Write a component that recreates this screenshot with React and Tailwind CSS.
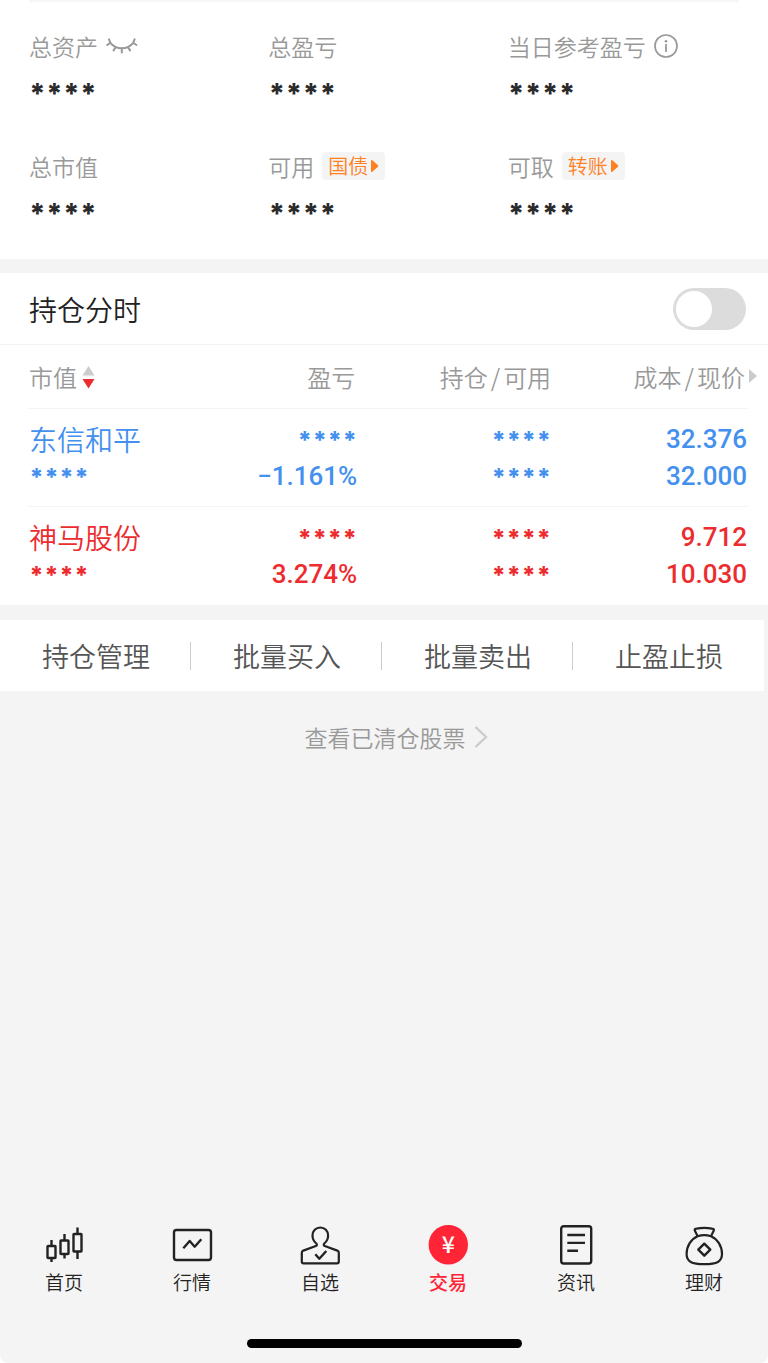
import { useState } from "react";

const summary = [
  { label: "总资产", icon: "eye" },
  { label: "总盈亏" },
  { label: "当日参考盈亏", icon: "info" },
  { label: "总市值" },
  { label: "可用", badge: "国债" },
  { label: "可取", badge: "转账" },
];

const holdings = [
  { name: "东信和平", percent: "−1.161%", cost: "32.376", price: "32.000", color: "text-[#4390ee]" },
  { name: "神马股份", percent: "3.274%", cost: "9.712", price: "10.030", color: "text-[#ec2c2e]" },
];

const actions = ["持仓管理", "批量买入", "批量卖出", "止盈止损"];

const tabs = [
  { label: "首页", Icon: CandlesIcon },
  { label: "行情", Icon: MarketIcon },
  { label: "自选", Icon: PersonIcon },
  { label: "交易", Icon: TradeIcon, active: true },
  { label: "资讯", Icon: NewsIcon },
  { label: "理财", Icon: BagIcon },
];

function EyeClosedIcon() {
  return (
    <svg viewBox="0 0 32 20" className="h-5 w-8" fill="none" stroke="currentColor" strokeWidth="2" strokeLinecap="round" aria-hidden="true">
      <path d="M3 3.4 4.4 6.8C10 14 21.6 14 27.2 6.8L28.6 3.4M4.4 6.8 1.2 9M27.2 6.8 30.4 9M15.8 12.4V16.5M9.6 11.2 7.6 14.4M22 11.2 24 14.4" />
    </svg>
  );
}

function InfoIcon() {
  return (
    <svg viewBox="0 0 24 24" className="size-6" fill="none" stroke="currentColor" aria-hidden="true">
      <circle cx="12" cy="12" r="11" strokeWidth="1.7" />
      <path d="M12 10v8" strokeWidth="1.8" />
      <circle cx="12" cy="7.2" r="1.3" fill="currentColor" stroke="none" />
    </svg>
  );
}

function TabIcon({ children }) {
  return (
    <svg viewBox="0 0 44 44" className="size-11" fill="none" stroke="currentColor" strokeWidth="2.4" strokeLinejoin="round" aria-hidden="true">
      {children}
    </svg>
  );
}

function CandlesIcon() {
  return (
    <TabIcon>
      <rect x="5.5" y="22" width="8" height="12" rx="0.6" />
      <rect x="18.5" y="16.5" width="8" height="13.5" rx="0.6" />
      <rect x="31.5" y="10" width="8" height="17.5" rx="0.6" />
      <path d="M9.5 16v6M9.5 34v4M22.5 10v6.5M22.5 30v4.5M35.5 3.5V10M35.5 27.5V35" />
    </TabIcon>
  );
}

function MarketIcon() {
  return (
    <TabIcon>
      <rect x="4" y="6" width="37" height="30" rx="2.5" />
      <path d="m13.3 24.3 6.4-7.3 5 5.7 6.6-7.4" />
    </TabIcon>
  );
}

function PersonIcon() {
  return (
    <TabIcon>
      <path
        strokeWidth="2.2"
        d="M18.3 19.5C15.3 17 14.5 14 14.5 11.5 14.5 7 17.8 3.5 22.3 3.5S30.1 7 30.1 11.5C30.1 14 29.3 17 26.3 19.5 25.4 20.5 25.6 21.6 26.8 22L39.3 26.6C40.3 27 40.8 27.8 40.8 28.8V37.5C40.8 38.8 40.3 39.3 39 39.3H5.6C4.3 39.3 3.8 38.8 3.8 37.5V28.8C3.8 27.8 4.3 27 5.3 26.6L17.8 22C19 21.6 19.2 20.5 18.3 19.5Z"
      />
      <path d="m17.3 30.3 4 4.4 7-7.7" />
    </TabIcon>
  );
}

function TradeIcon() {
  return (
    <TabIcon>
      <circle cx="22.3" cy="20.7" r="19.7" fill="#ff2436" stroke="none" />
      <text x="22.3" y="29" textAnchor="middle" fill="#fff" stroke="none" className="font-['Noto_Sans_CJK_SC',sans-serif] text-[23px] font-medium">
        ¥
      </text>
    </TabIcon>
  );
}

function NewsIcon() {
  return (
    <TabIcon>
      <rect x="7.2" y="2.2" width="30" height="37.3" rx="2.5" />
      <path d="M13.3 11H31M13.3 18.9H31M13.3 26.7H24" />
    </TabIcon>
  );
}

function BagIcon() {
  return (
    <TabIcon>
      <path
        strokeWidth="2.2"
        d="M15.6 12.2 12.8 6.6C12.3 5.3 13.2 4.6 14.6 4.6 19.6 3.6 25 3.6 30 4.6 31.4 4.6 32.3 5.3 31.8 6.6L29 12.2"
      />
      <path
        strokeWidth="2.2"
        d="M15.6 12.2C20 10.8 24.6 10.8 29 12.2 35.5 15 40 22 40 30 40 37.6 35 40.2 22.3 40.2S4.6 37.6 4.6 30C4.6 22 9.1 15 15.6 12.2Z"
      />
      <path d="m22.3 19.7 6 6-6 6-6-6z" />
    </TabIcon>
  );
}

function Masked({ large }) {
  return (
    <span className={`inline-flex pt-1 font-[Inter,sans-serif] font-extrabold ${large ? "text-[28px] leading-8" : "text-2xl leading-7"}`}>
      {[0, 1, 2, 3].map((i) => (
        <span key={i} className={large ? "w-[17px] text-center" : "w-[15px] text-center"}>*</span>
      ))}
    </span>
  );
}

function Pair({ left, right }) {
  return (
    <>
      {left}
      <span className="mx-[3px]">/</span>
      {right}
    </>
  );
}

function HoldingRow({ item }) {
  const line = "flex h-[37px] items-center";

  return (
    <tr className={`border-t border-[#f3f3f3] ${item.color}`}>
      <td className="pt-3 pb-[11px]">
        <div className={`${line} text-[28px]`}>{item.name}</div>
        <div className={line}><Masked /></div>
      </td>
      <td className="pt-3 pr-0.5 pb-[11px]">
        <div className={`${line} justify-end`}><Masked /></div>
        <div className={`${line} justify-end font-[Roboto,sans-serif] text-[26px] font-medium`}>{item.percent}</div>
      </td>
      <td className="pt-3 pr-0.5 pb-[11px]">
        <div className={`${line} justify-end`}><Masked /></div>
        <div className={`${line} justify-end`}><Masked /></div>
      </td>
      <td className="pt-3 pb-[11px] font-[Roboto,sans-serif] text-[26px] font-medium">
        <div className={`${line} justify-end`}>{item.cost}</div>
        <div className={`${line} justify-end`}>{item.price}</div>
      </td>
    </tr>
  );
}

export default function App() {
  const [showChart, setShowChart] = useState(false);

  return (
    <div className="bg-white font-['Noto_Sans_CJK_SC',sans-serif] font-[350]">
      <div className="flex min-h-screen flex-col rounded-b-lg bg-[#f4f4f4]">
        <section className="bg-white pr-[21px] pb-[17px] pl-[29px]">
          <div className="mr-2 h-0.5 bg-[#f6f6f6]" />
          <div className="grid grid-cols-3">
            {summary.map((item) => (
              <div key={item.label} className="h-30 pt-7">
                <div className="flex h-8 items-center gap-2 text-[23px] leading-8 text-[#999]">
                  <span>{item.label}</span>
                  {item.icon === "eye" ? (
                    <button type="button" aria-label="显示金额"><EyeClosedIcon /></button>
                  ) : null}
                  {item.icon === "info" ? (
                    <button type="button" aria-label="说明"><InfoIcon /></button>
                  ) : null}
                  {item.badge ? (
                    <button type="button" className="flex h-7 items-center gap-0.5 rounded bg-[#f4f4f4] px-1.5 text-xl text-[#ff801f]">
                      {item.badge}
                      <svg viewBox="0 0 9 14" className="h-3.5 w-[9px]" fill="currentColor" aria-hidden="true">
                        <path d="M1 2.2Q1 .2 2.6 1.5L8 6.2Q8.8 7 8 7.8L2.6 12.5Q1 13.8 1 11.8Z" />
                      </svg>
                    </button>
                  ) : null}
                </div>
                <div className="mt-3 text-[#2b2b2b]"><Masked large /></div>
              </div>
            ))}
          </div>
        </section>

        <section className="mt-3.5 bg-white">
          <div className="flex h-[72px] items-center justify-between border-b border-[#f2f2f2] pt-px pr-[22px] pl-[29px]">
            <label htmlFor="intraday" className="text-[28px] text-[#222]">持仓分时</label>
            <span className="relative inline-flex">
              <input
                id="intraday"
                type="checkbox"
                role="switch"
                checked={showChart}
                onChange={(e) => setShowChart(e.target.checked)}
                className="peer h-[42px] w-[73px] appearance-none rounded-full bg-[#dcdcdc] checked:bg-[#ec2c2e]"
              />
              <span className="pointer-events-none absolute top-[3px] left-[3px] size-9 rounded-full bg-white peer-checked:left-[34px]" />
            </span>
          </div>

          <div className="pr-[21px] pb-px pl-[29px]">
            <table className="w-full table-fixed border-collapse">
              <thead>
                <tr className="h-[63px] text-2xl text-[#999]">
                  <th className="w-[20%] pt-0.5 text-left font-[350]">
                    <button type="button" className="flex items-center gap-[5px]">
                      市值
                      <svg viewBox="0 0 13 24" className="h-6 w-[13px]" aria-hidden="true">
                        <path d="M6.5 1 12.5 10.5H.5Z" fill="#ccc" />
                        <path d="M6.5 23.5 12.5 14H.5Z" fill="#ec2c2e" />
                      </svg>
                    </button>
                  </th>
                  <th className="w-[26%] pt-0.5 pr-1 text-right font-[350]">盈亏</th>
                  <th className="w-[27%] pt-0.5 pr-0.5 text-right font-[350]"><Pair left="持仓" right="可用" /></th>
                  <th className="relative w-[27%] pt-0.5 pr-0.5 text-right font-[350]">
                    <Pair left="成本" right="现价" />
                    <svg viewBox="0 0 8 14" className="absolute top-1/2 -right-2.5 h-3.5 w-2 -translate-y-1/2" fill="#ccc" aria-hidden="true">
                      <path d="M0 0 8 7 0 14Z" />
                    </svg>
                  </th>
                </tr>
              </thead>
              <tbody>
                {holdings.map((item) => (
                  <HoldingRow key={item.name} item={item} />
                ))}
              </tbody>
            </table>
          </div>
        </section>

        <section className="mt-[15px] mr-1 grid h-[71px] grid-cols-4 items-center bg-white pt-0.5">
          {actions.map((action) => (
            <button key={action} type="button" className="h-7 border-r border-[#ccc] pl-0.5 text-[27px] leading-7 text-[#555] last:border-transparent">
              {action}
            </button>
          ))}
        </section>

        <a href="#closed" className="mt-7 flex items-center justify-center gap-2 pl-6 text-[23px] leading-9 text-[#999]">
          查看已清仓股票
          <svg viewBox="0 0 14 22" className="h-[22px] w-3.5" fill="none" stroke="#ccc" strokeWidth="2.4" aria-hidden="true">
            <path d="M1.5 1 12 11 1.5 21" />
          </svg>
        </a>

        <nav className="mt-auto grid grid-cols-6 pb-[43px]">
          {tabs.map(({ label, Icon, active }) => (
            <a
              key={label}
              href={`#${label}`}
              className={`flex flex-col items-center text-[19px] leading-7 ${active ? "font-medium text-[#ff2436]" : "text-[#222]"}`}
            >
              <Icon />
              {label}
            </a>
          ))}
        </nav>
        <div className="mx-auto mb-[15px] h-[9px] w-[275px] rounded-full bg-black" />
      </div>
    </div>
  );
}
